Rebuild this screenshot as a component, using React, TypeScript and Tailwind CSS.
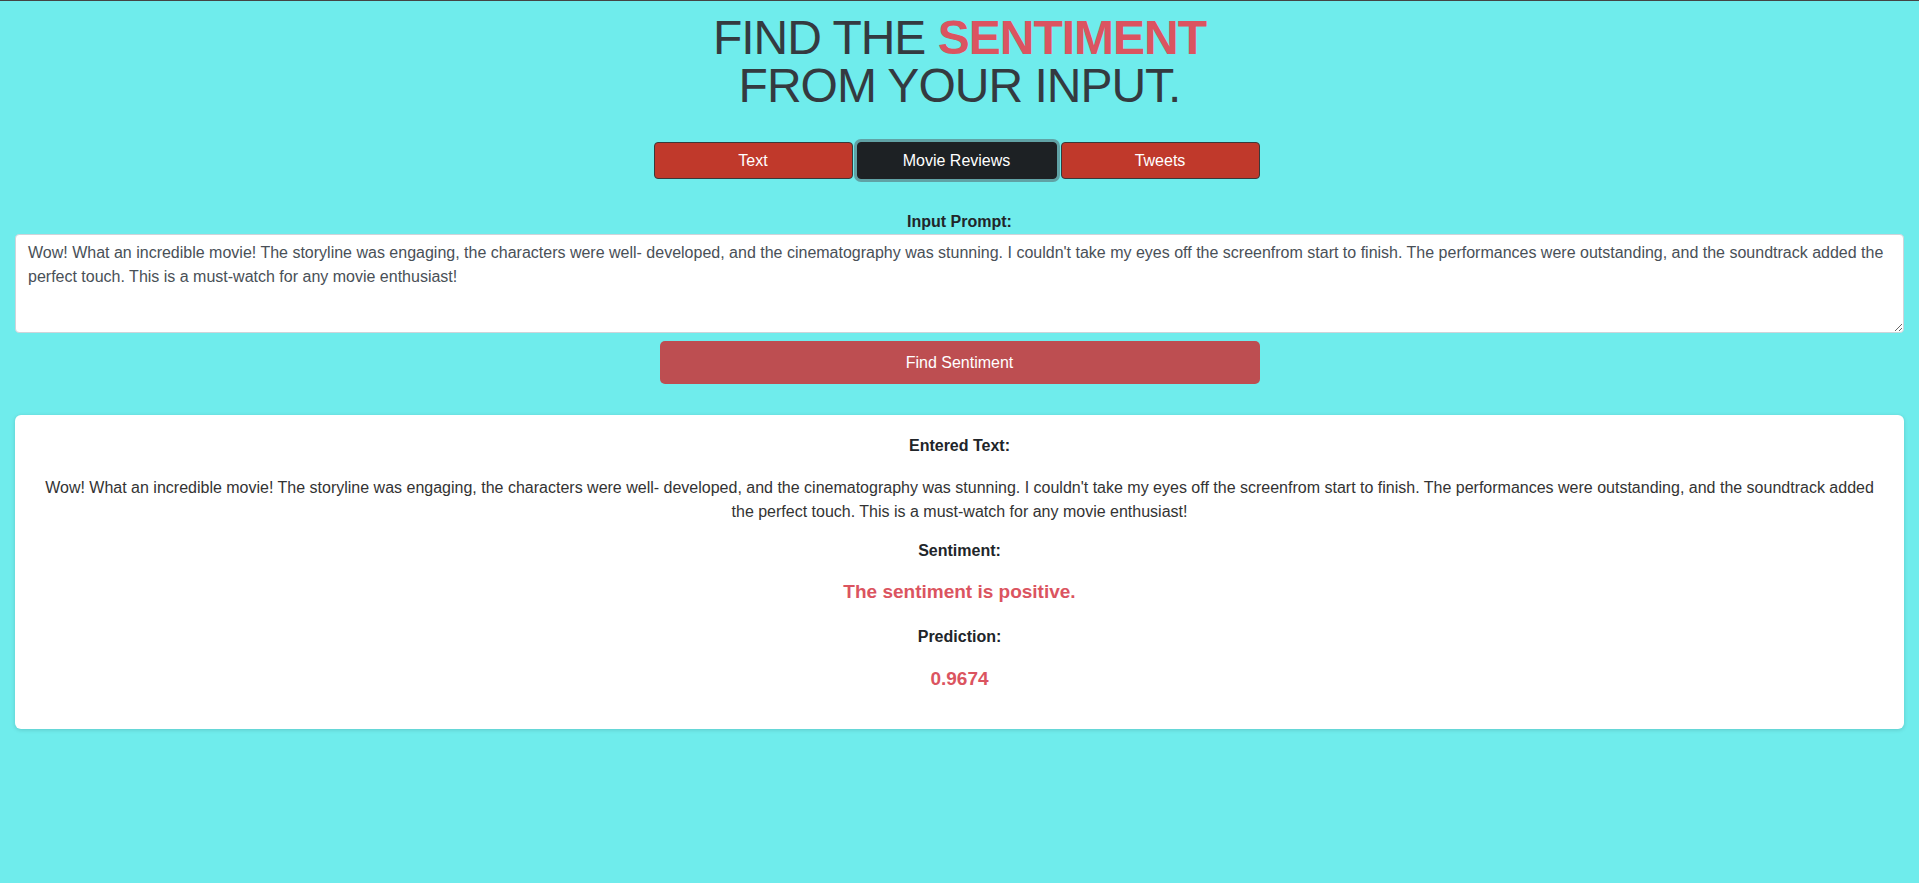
import { useState } from "react";

const reviewText =
  "Wow! What an incredible movie! The storyline was engaging, the characters were well- developed, and the cinematography was stunning. I couldn't take my eyes off the screenfrom start to finish. The performances were outstanding, and the soundtrack added the perfect touch. This is a must-watch for any movie enthusiast!";

const tabs = ["Text", "Movie Reviews", "Tweets"];

export default function App() {
  const [active, setActive] = useState("Movie Reviews");
  const [input, setInput] = useState(reviewText);

  return (
    <div className="min-h-screen bg-[#6fecec] border-t border-[#444] px-[15px] font-['Liberation_Sans',Arial,sans-serif] text-[#212529]">
      <h1 className="pt-[13px] text-center text-[48px] leading-[48px] tracking-[-1px] text-[#343a40]">
        FIND THE <span className="font-bold text-[#db5460]">SENTIMENT</span>
        <br />
        FROM YOUR INPUT.
      </h1>

      <div className="mt-[32px] flex justify-center gap-1 pr-[6px]">
        {tabs.map((tab) =>
          tab === active ? (
            <button
              key={tab}
              onClick={() => setActive(tab)}
              className="h-[37px] w-[200px] rounded-[4px] border border-[#1d2124] bg-[#1d2124] text-base text-white shadow-[0_0_0_3px_rgba(82,88,93,0.5)]"
            >
              {tab}
            </button>
          ) : (
            <button
              key={tab}
              onClick={() => setActive(tab)}
              className="h-[37px] w-[199px] rounded-[4px] border border-[#3a3a3a] bg-[#c0392b] text-base text-white"
            >
              {tab}
            </button>
          )
        )}
      </div>

      <label className="mt-[31px] block text-center text-base font-bold leading-6 text-[#212529]">
        Input Prompt:
      </label>
      <textarea
        value={input}
        onChange={(e) => setInput(e.target.value)}
        rows={3}
        className="block h-[99px] w-full rounded-[4px] border border-[#ced4da] bg-white px-3 py-[6px] text-base leading-6 text-[#495057] outline-none"
      />
      <button className="mx-auto mt-2 block h-[43px] w-[600px] rounded-[5px] bg-[#bd4e51] text-base text-white">
        Find Sentiment
      </button>

      <div className="mt-[31px] rounded-[6px] bg-white px-5 pb-[38px] pt-[19px] text-center shadow-[0_1px_4px_rgba(0,0,0,0.15)]">
        <p className="font-bold leading-6 text-[#212529]">Entered Text:</p>
        <p className="mt-[18px] leading-6 text-[#333]">{reviewText}</p>
        <p className="mt-[15px] font-bold leading-6 text-[#212529]">Sentiment:</p>
        <p className="mt-[17px] text-[19px] font-bold leading-6 text-[#db5460]">
          The sentiment is positive.
        </p>
        <p className="mt-[21px] font-bold leading-6 text-[#212529]">Prediction:</p>
        <p className="mt-[18px] text-[19px] font-bold leading-6 text-[#db5460]">0.9674</p>
      </div>
    </div>
  );
}
